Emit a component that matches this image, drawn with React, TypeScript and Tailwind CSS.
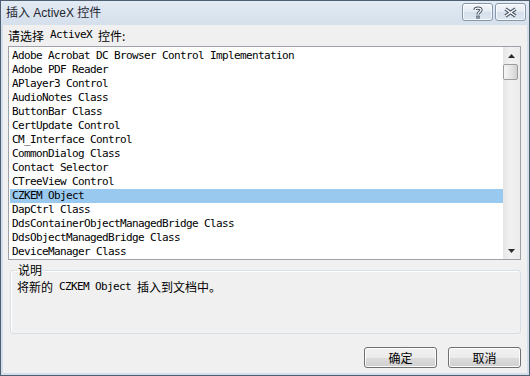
import React from 'react';

const items = [
  'Adobe Acrobat DC Browser Control Implementation',
  'Adobe PDF Reader',
  'APlayer3 Control',
  'AudioNotes Class',
  'ButtonBar Class',
  'CertUpdate Control',
  'CM_Interface Control',
  'CommonDialog Class',
  'Contact Selector',
  'CTreeView Control',
  'CZKEM Object',
  'DapCtrl Class',
  'DdsContainerObjectManagedBridge Class',
  'DdsObjectManagedBridge Class',
  'DeviceManager Class',
];

const mono = "font-['DejaVu_Sans_Mono',monospace] text-[11px] tracking-[-0.62px]";
const cjk = "font-['Noto_Sans_CJK_SC',sans-serif] text-[12px] tracking-normal";

function CaptionButton({ kind }: { kind: 'help' | 'close' }) {
  return (
    <div className="w-[31px] h-[18px] rounded-[3px] border border-[#8797ab] bg-[linear-gradient(to_bottom,#f4f7fb_0%,#e4ebf3_50%,#d6e0ec_51%,#dde6f0_100%)] flex items-center justify-center shadow-[inset_0_0_0_1px_rgba(255,255,255,0.7)]">
      {kind === 'help' ? (
        <svg width="12" height="13" viewBox="0 0 12 13">
          <path d="M3 4 C3 1.5 9 1.5 9 4 C9 6 6 6 6 8.5" fill="none" stroke="#4b5766" strokeWidth="3.2" />
          <path d="M3 4 C3 1.5 9 1.5 9 4 C9 6 6 6 6 8.5" fill="none" stroke="#ffffff" strokeWidth="1.2" />
          <rect x="4.3" y="9.6" width="3.4" height="3" fill="#4b5766" />
          <rect x="5.3" y="10.6" width="1.4" height="1" fill="#ffffff" />
        </svg>
      ) : (
        <svg width="15" height="11" viewBox="0 0 15 11">
          <path d="M2.5 2 L12.5 9 M12.5 2 L2.5 9" fill="none" stroke="#4b5766" strokeWidth="3.6" />
          <path d="M2.5 2 L12.5 9 M12.5 2 L2.5 9" fill="none" stroke="#ffffff" strokeWidth="1.4" />
        </svg>
      )}
    </div>
  );
}

function ScrollArrow({ up }: { up?: boolean }) {
  return (
    <div className="h-[17px] flex items-center justify-center">
      <svg width="7" height="4" viewBox="0 0 7 4">
        {up ? <path d="M0 4 L3.5 0 L7 4 Z" fill="#2b2b2b" /> : <path d="M0 0 L3.5 4 L7 0 Z" fill="#2b2b2b" />}
      </svg>
    </div>
  );
}

export default function App() {
  return (
    <div className="w-[530px] h-[376px] border border-[#4e5f72] bg-[#d3deea] flex flex-col overflow-hidden">
      {/* Title bar */}
      <div className="h-[24px] shrink-0 flex pl-[5px] pr-[3px] bg-[linear-gradient(to_bottom,#e2eaf3,#d5e0ec)]">
        <span className="self-center font-['Liberation_Sans','Noto_Sans_CJK_SC',sans-serif] text-[12px] text-[#1e2631] leading-none">
          插入 ActiveX 控件
        </span>
        <div className="ml-auto pt-[2px] flex gap-[2px]">
          <CaptionButton kind="help" />
          <CaptionButton kind="close" />
        </div>
      </div>

      {/* Client */}
      <div className="flex-1 mx-[2px] mb-[2px] bg-[#f0f0f0] flex flex-col pl-[5px] pr-[5px] text-black">
        <div className="h-[21px] flex items-center">
          <span className={cjk}>请选择</span>
          <span className={mono}>&nbsp;ActiveX&nbsp;</span>
          <span className={cjk}>控件:</span>
        </div>

        {/* List box */}
        <div className="w-[513px] h-[214px] border border-[#9ea2a8] bg-white flex">
          <div className="flex-1 pt-[2px] pl-[1px]">
            {items.map((it) => (
              <div
                key={it}
                className={`h-[14px] flex items-center pl-[2px] whitespace-nowrap ${mono} ${
                  it === 'CZKEM Object' ? 'bg-[#99c9ef]' : ''
                }`}
              >
                {it}
              </div>
            ))}
          </div>
          <div className="w-[17px] bg-[linear-gradient(to_right,#e6e6e6,#f1f1f1_40%,#ececec)] flex flex-col">
            <ScrollArrow up />
            <div className="h-[16px] mr-[2px] rounded-[2px] border border-[#9c9c9c] bg-[linear-gradient(to_right,#f6f6f6,#e4e4e4_60%,#d0d0d0)]" />
            <div className="flex-1" />
            <ScrollArrow />
          </div>
        </div>

        {/* Description group */}
        <fieldset className="ml-[2px] mt-[4px] w-[511px] h-[70px] border border-[#d5dfe5] rounded-[3px] pl-[6px] shadow-[inset_1px_1px_0_#ffffff]">
          <legend className={`px-[1px] leading-[12px] ${cjk}`}>说明</legend>
          <div className="mt-[4px] h-[14px] flex items-center">
            <span className={cjk}>将新的</span>
            <span className={mono}>&nbsp;CZKEM Object&nbsp;</span>
            <span className={cjk}>插入到文档中。</span>
          </div>
        </fieldset>

        {/* Buttons */}
        <div className="mt-[13px] flex justify-end gap-[11px] pr-[1px]">
          {['确定', '取消'].map((t) => (
            <button
              key={t}
              className={`w-[73px] h-[21px] rounded-[3px] border border-[#707070] bg-[linear-gradient(to_bottom,#f2f2f2_0%,#ebebeb_50%,#dddddd_50%,#cfcfcf_100%)] shadow-[inset_0_0_0_1px_#fcfcfc] leading-none ${cjk}`}
            >
              {t}
            </button>
          ))}
        </div>
      </div>
    </div>
  );
}
